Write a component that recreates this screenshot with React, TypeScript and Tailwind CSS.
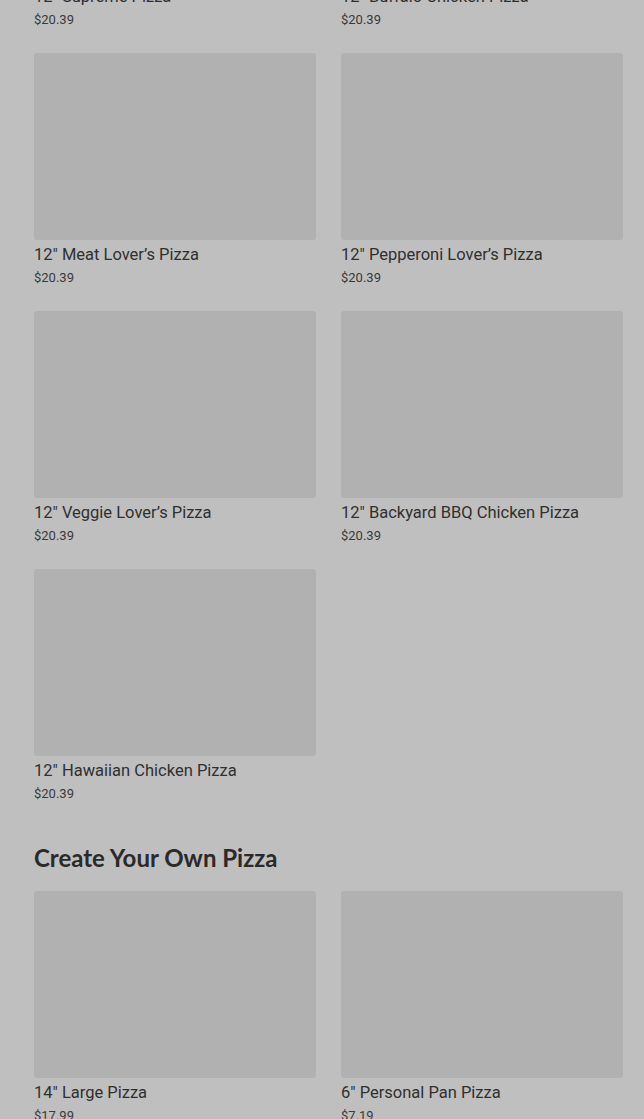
import React from 'react';

type Item = { name: string; price: string };

const specialty: Item[] = [
  { name: '12" Supreme Pizza', price: '$20.39' },
  { name: '12" Buffalo Chicken Pizza', price: '$20.39' },
  { name: '12" Meat Lover’s Pizza', price: '$20.39' },
  { name: '12" Pepperoni Lover’s Pizza', price: '$20.39' },
  { name: '12" Veggie Lover’s Pizza', price: '$20.39' },
  { name: '12" Backyard BBQ Chicken Pizza', price: '$20.39' },
  { name: '12" Hawaiian Chicken Pizza', price: '$20.39' },
];

const createOwn: Item[] = [
  { name: '14" Large Pizza', price: '$17.99' },
  { name: '6" Personal Pan Pizza', price: '$7.19' },
];

function MenuCard({ item }: { item: Item }) {
  return (
    <div className="flex flex-col">
      <div className="h-[187px] rounded-[3px] bg-[#b1b1b1]" />
      <div className="mt-[4px] text-[16.5px] leading-[22px] text-[#303030]">{item.name}</div>
      <div className="mt-[1px] text-[13px] leading-[22px] text-[#3a3a3a]">{item.price}</div>
    </div>
  );
}

function Grid({ items }: { items: Item[] }) {
  return (
    <div className="grid grid-cols-[282px_282px] gap-x-[25px] gap-y-[22px]">
      {items.map(it => <MenuCard key={it.name} item={it} />)}
    </div>
  );
}

export default function App() {
  return (
    <div className="h-[1119px] overflow-hidden bg-[#bfbfbf] pl-[34px]" style={{ fontFamily: 'Roboto, "Liberation Sans", sans-serif' }}>
      <div className="-mt-[205px]">
        <Grid items={specialty} />
      </div>
      <h2 className="mt-[37px] mb-[17px] text-[24px] font-bold leading-[32px] text-[#2a2a2a]" style={{ fontFamily: 'Lato, "Liberation Sans", sans-serif' }}>
        Create Your Own Pizza
      </h2>
      <Grid items={createOwn} />
    </div>
  );
}
